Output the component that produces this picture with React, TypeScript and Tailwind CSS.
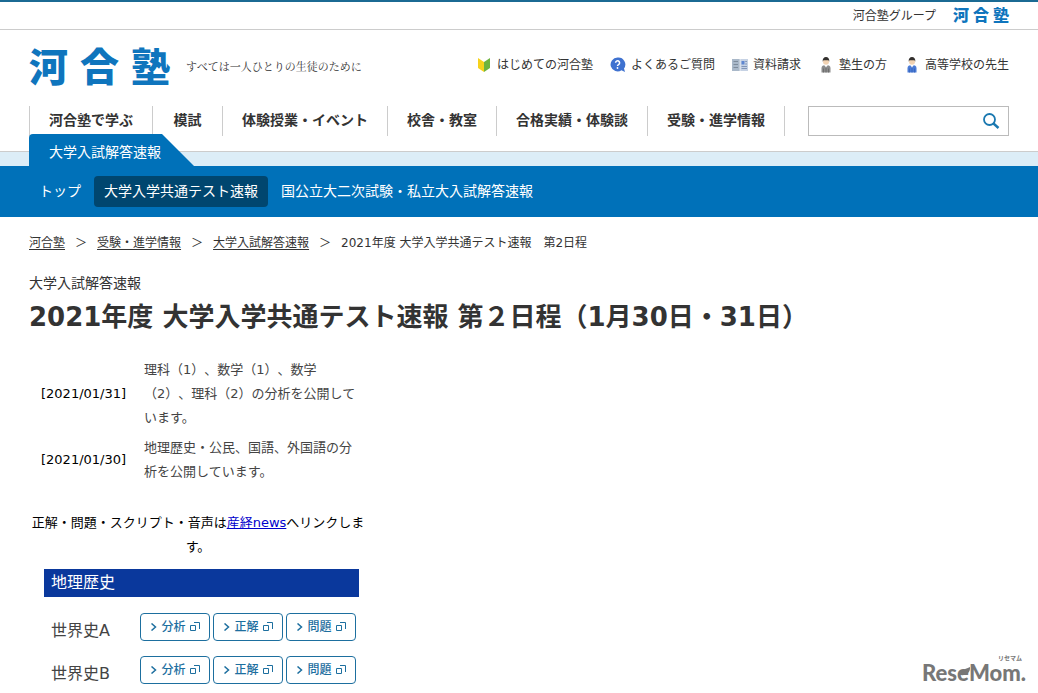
import React from "react";

const NAV = ["河合塾で学ぶ", "模試", "体験授業・イベント", "校舎・教室", "合格実績・体験談", "受験・進学情報"];

const SUB_NAV = [
    { label: "トップ", active: false },
    { label: "大学入学共通テスト速報", active: true },
    { label: "国公立大二次試験・私立大入試解答速報", active: false },
];

const CRUMBS = ["河合塾", "受験・進学情報", "大学入試解答速報"];

const NEWS = [
    { date: "[2021/01/31]", text: "理科（1）、数学（1）、数学（2）、理科（2）の分析を公開しています。" },
    { date: "[2021/01/30]", text: "地理歴史・公民、国語、外国語の分析を公開しています。" },
];

const SUBJECTS = ["世界史A", "世界史B"];
const ACTIONS = ["分析", "正解", "問題"];

function BeginnerIcon() {
    return (
        <svg width="16" height="16" viewBox="0 0 16 16" aria-hidden="true">
            <path d="M2 1 8 5v10L2 11z" fill="#f6d21c" />
            <path d="M14 1 8 5v10l6-4z" fill="#6db33f" />
        </svg>
    );
}

function QuestionIcon() {
    return (
        <svg width="16" height="16" viewBox="0 0 16 16" aria-hidden="true">
            <path d="M7.500 .5a7 7 0 1 0 4 12.800L15 15l-1-3.500A7 7 0 0 0 7.500 .5z" fill="#3f72d0" />
            <path d="M5.600 5.800a2 2 0 1 1 3.200 1.600c-.9.6-1.300.9-1.300 1.700" fill="none" stroke="#fff" strokeWidth="1.500" />
            <circle cx="7.500" cy="11" r=".9" fill="#fff" />
        </svg>
    );
}

function BrochureIcon() {
    return (
        <svg width="16" height="16" viewBox="0 0 16 16" aria-hidden="true">
            <path d="M0 2h7.700v12H0z" fill="#a9b8c9" />
            <path d="M8.300 2H16v12H8.300z" fill="#c6d2e4" />
            <path d="M1.500 4.500h4.500M1.500 7.500h4.500M1.500 10.500h4.500" stroke="#7d8b9b" strokeWidth="1.200" />
            <path d="M9.500 4h3v3.500h-3z" fill="#5f86d0" />
            <path d="M13.200 4.500h1.800M13.200 7h1.800M9.500 9.500h5.500M9.500 11.500h5.500" stroke="#8195b8" />
        </svg>
    );
}

function PersonIcon({ body, trim }: { body: string; trim: string }) {
    return (
        <svg width="16" height="16" viewBox="0 0 16 16" aria-hidden="true">
            <path d="M3.500 15.500V11c0-2 1.500-3 4.500-3s4.500 1 4.500 3v4.500z" fill={body} />
            <path d="M6.200 8h3.600L8 11z" fill="#fff" />
            <path d="M8 9.500v6M5.500 11.500v4M10.500 11.500v4" stroke={trim} strokeWidth=".8" />
            <circle cx="8" cy="4.800" r="3" fill="#f2d3b3" />
            <path d="M4.700 4.800C4.300 1.500 6 0 8 0s3.700 1.500 3.300 4.800L10.500 3.300h-5z" fill="#33302e" />
        </svg>
    );
}

const UTILITY = [
    { label: "はじめての河合塾", icon: <BeginnerIcon /> },
    { label: "よくあるご質問", icon: <QuestionIcon /> },
    { label: "資料請求", icon: <BrochureIcon /> },
    { label: "塾生の方", icon: <PersonIcon body="#8b8b8b" trim="#666" /> },
    { label: "高等学校の先生", icon: <PersonIcon body="#4a7bd6" trim="#3562b8" /> },
];

function ActionLink({ label }: { label: string }) {
    return (
        <a href="#" className="flex h-7 w-[70px] items-center justify-center gap-1 rounded border border-[#1d6f9f] bg-white text-xs font-medium text-[#1d6f9f]">
            <svg width="7" height="8" viewBox="0 0 7 8" fill="none" stroke="currentColor" strokeWidth="1.500" aria-hidden="true">
                <path d="M1.500 .5 5.500 4 1.500 7.500" />
            </svg>
            {label}
            <svg width="10" height="10" viewBox="0 0 10 10" fill="none" stroke="currentColor" aria-hidden="true">
                <path d="M.5 3.500h5v5h-5zM4 .5h5.500V7" />
            </svg>
        </a>
    );
}

export default function App() {
    return (
        <div className="relative min-h-screen bg-white font-['DejaVu_Sans','Noto_Sans_CJK_JP',sans-serif] text-[#333] [text-spacing-trim:space-all]">
            <header>
                {/* Group bar */}
                <div className="flex h-[30px] items-center justify-end gap-[17px] border-t-2 border-b border-t-[#1b6a93] border-b-[#ccc] px-[29px] text-xs">
                    <a href="#">河合塾グループ</a>
                    <a href="#" className="flex gap-1 text-base leading-4 font-black text-[#0f75bd]">
                        <span>河</span><span>合</span><span>塾</span>
                    </a>
                </div>

                {/* Logo + utility links */}
                <div className="flex h-[76px] items-center justify-between px-[29px]">
                    <div className="flex items-center gap-4">
                        <a href="#" className="flex gap-3 text-[39px] leading-10 font-black text-[#0f75bd]">
                            <span>河</span><span>合</span><span>塾</span>
                        </a>
                        <p className="pb-1 font-['Noto_Serif_CJK_JP','Noto_Sans_CJK_JP',serif] text-[11px]">すべては一人ひとりの生徒のために</p>
                    </div>
                    <ul className="flex gap-[17px] pb-1.5 text-xs">
                        {UTILITY.map((u) => (
                            <li key={u.label}>
                                <a href="#" className="flex items-center gap-[5px]">{u.icon}{u.label}</a>
                            </li>
                        ))}
                    </ul>
                </div>

                {/* Main nav */}
                <div className="flex justify-between border-b border-[#ccc] px-[29px] pb-[15px]">
                    <nav className="flex border-r border-[#ccc] text-sm font-bold">
                        {NAV.map((item) => (
                            <a key={item} href="#" className="flex h-[30px] min-w-[70px] items-center justify-center border-l border-[#ccc] px-[19px] pb-0.5">{item}</a>
                        ))}
                    </nav>
                    <form className="flex h-[30px] w-[201px] items-center border border-[#bbb] pr-2">
                        <input type="text" aria-label="検索" className="min-w-0 flex-1 px-2 text-sm outline-none" />
                        <button type="button" aria-label="検索する">
                            <svg width="18" height="18" viewBox="0 0 18 18" fill="none" stroke="#1a78b0" aria-hidden="true">
                                <circle cx="7.500" cy="7.500" r="5.500" strokeWidth="1.800" />
                                <path d="m11.500 11.500 5 4.500" strokeWidth="2.400" />
                            </svg>
                        </button>
                    </form>
                </div>

                {/* Section tab */}
                <div className="relative h-[14px] bg-[#dcedf7]">
                    <a href="#" className="absolute bottom-0 left-[29px] flex h-8 items-center rounded-tl bg-[#0071b9] pt-1 pr-[33px] pl-5 text-sm text-white [clip-path:polygon(0_0,calc(100%-32px)_0,100%_100%,0_100%)]">大学入試解答速報</a>
                </div>
                <nav className="flex h-[51px] items-center gap-[3px] bg-[#0071b9] px-[29px] text-sm text-white">
                    {SUB_NAV.map((s) => (
                        <a key={s.label} href="#" className={`flex h-[31px] items-center rounded px-[10px] pb-0.5 ${s.active ? "bg-[#00466f]" : ""}`}>{s.label}</a>
                    ))}
                </nav>
            </header>

            <main className="px-[29px] pb-2">
                <ol className="flex pt-4 text-xs leading-5">
                    {CRUMBS.map((c) => (
                        <li key={c}>
                            <a href="#" className="underline underline-offset-2">{c}</a>
                            <span className="mx-[10px]">＞</span>
                        </li>
                    ))}
                    <li>2021年度 大学入学共通テスト速報　第2日程</li>
                </ol>

                <p className="mt-5 text-sm leading-5">大学入試解答速報</p>
                <h1 className="mt-1 text-[26px] leading-10 font-bold">2021年度 大学入学共通テスト速報 第２日程（1月30日・31日）</h1>

                <div className="mt-[18px] w-[338px] text-[13px] leading-6">
                    <table className="ml-1">
                        <tbody>
                            {NEWS.map((n) => (
                                <tr key={n.date}>
                                    <td className="py-[3px] pr-[10px] pl-2 whitespace-nowrap text-black">{n.date}</td>
                                    <td className="w-[232px] px-2 py-[3px] text-[#444]">{n.text}</td>
                                </tr>
                            ))}
                        </tbody>
                    </table>

                    <p className="mt-6 text-center text-black">
                        正解・問題・スクリプト・音声は<a href="#" className="text-[#0000cc] underline">産経news</a>へリンクします。
                    </p>

                    <section className="mt-[10px] ml-[15px] w-[315px] text-base">
                        <h2 className="h-7 bg-[#0a389c] px-[7px] leading-7 text-white">地理歴史</h2>
                        <div className="mt-4 flex flex-col gap-[15px]">
                            {SUBJECTS.map((s) => (
                                <div key={s} className="flex h-7 justify-between pr-[3px] pl-[7px] leading-9 text-[#444]">
                                    <span>{s}</span>
                                    <div className="flex gap-[3px]">
                                        {ACTIONS.map((a) => <ActionLink key={a} label={a} />)}
                                    </div>
                                </div>
                            ))}
                        </div>
                    </section>
                </div>
            </main>

            {/* Credit */}
            <div className="absolute right-3 bottom-2 font-['Lato','Noto_Sans_CJK_JP',sans-serif] text-[#777]">
                <div className="pr-1 text-right text-[6px] leading-[6px] font-bold">リセマム</div>
                <div className="text-[22px] leading-6 font-black">
                    Res
                    <span className="relative">
                        e
                        <svg width="12" height="10" viewBox="0 0 12 10" className="absolute top-2 left-0.5" aria-hidden="true">
                            <path d="M1 8C0 3 5 3 11 0c.5 5-3 9-10 8z" fill="#777" />
                        </svg>
                    </span>
                    Mom.
                </div>
            </div>
        </div>
    );
}
